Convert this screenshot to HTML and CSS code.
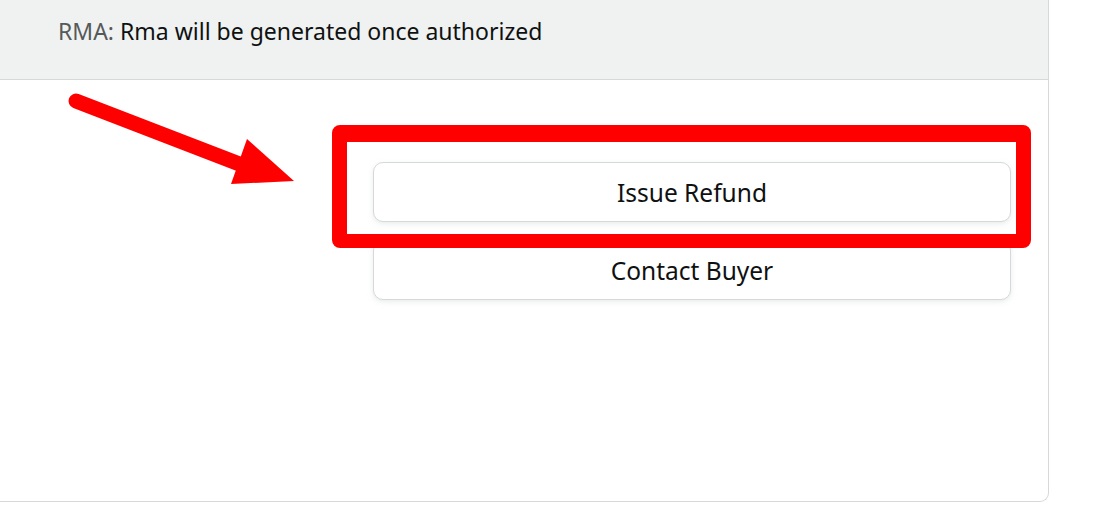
FILE: index.html
```html
<!DOCTYPE html>
<html>
<head>
<meta charset="utf-8">
<link rel="stylesheet" href="styles.css">
</head>
<body>
<div class="card">
  <div class="card-head">
    <p class="rma"><span class="label">RMA:</span> Rma will be generated once authorized</p>
  </div>
  <div class="card-body">
    <div class="actions">
      <button class="btn">Issue Refund</button>
      <button class="btn">Contact Buyer</button>
    </div>
  </div>
</div>
<div class="highlight"></div>
<svg class="arrow" width="320" height="200" viewBox="0 0 320 200">
  <line x1="76" y1="101" x2="242" y2="165" stroke="#ff0000" stroke-width="15" stroke-linecap="round"/>
  <polygon points="247,139 231,184 294,181" fill="#ff0000"/>
</svg>
</body>
</html>
```
FILE: styles.css
```css
html, body {
  margin: 0;
  padding: 0;
  background: #ffffff;
  width: 1094px;
  height: 522px;
  overflow: hidden;
  font-family: "Noto Sans", "Open Sans", sans-serif;
  color: #0f1111;
}
.card {
  margin-left: -12px;
  width: 1061px;
  height: 502px;
  border: 1px solid #d5d9d9;
  border-top: none;
  border-radius: 0 0 9px 9px;
  display: flex;
  flex-direction: column;
  box-sizing: border-box;
}
.card-head {
  height: 80px;
  background: #f0f2f2;
  border-bottom: 1px solid #d5d9d9;
  box-sizing: border-box;
  padding-left: 69px;
  padding-top: 15px;
}
.rma {
  margin: 0;
  font-size: 23px;
  line-height: 32px;
}
.label {
  color: #565959;
}
.card-body {
  flex: 1;
  display: flex;
  justify-content: flex-end;
  padding: 82px 37px 0 0;
}
.actions {
  width: 638px;
  display: flex;
  flex-direction: column;
  gap: 18px;
}
.btn {
  height: 60px;
  background: #ffffff;
  border: 1px solid #d5d9d9;
  border-radius: 10px;
  box-shadow: 0 2px 5px 0 rgba(213, 217, 217, 0.5);
  font-family: "Noto Sans", "Open Sans", sans-serif;
  font-size: 24.5px;
  color: #0f1111;
  padding: 0;
}
.highlight {
  position: absolute;
  left: 332px;
  top: 125px;
  width: 699px;
  height: 123px;
  box-sizing: border-box;
  border: 15px solid #ff0000;
  border-top-width: 17px;
  border-bottom-width: 14px;
  border-radius: 8px;
}
.arrow {
  position: absolute;
  left: 0;
  top: 0;
}
```
